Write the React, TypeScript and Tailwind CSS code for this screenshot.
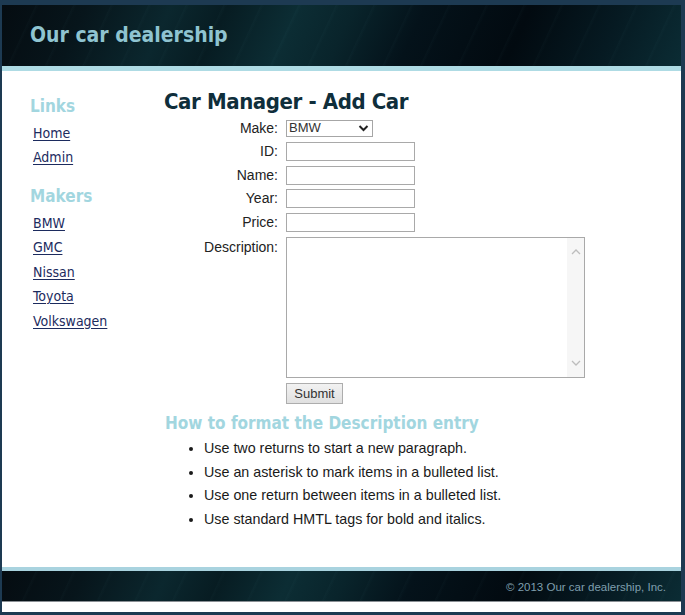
export default function App() {
  const heading = "font-['DejaVu_Sans_Condensed','DejaVu_Sans',sans-serif] font-stretch-condensed font-bold";
  const stripes =
    "bg-[repeating-linear-gradient(115deg,rgba(255,255,255,0)_0px,rgba(255,255,255,0)_30px,rgba(120,200,210,0.025)_31px,rgba(255,255,255,0)_34px),linear-gradient(115deg,#050c11_0%,#07151b_12%,#0b272e_24%,#071c22_32%,#0c2d34_42%,#09242b_50%,#04121a_60%,#020a10_75%,#061a22_88%,#0b2c34_100%)]";
  const rows = ["ID", "Name", "Year", "Price"];
  const makers = ["BMW", "GMC", "Nissan", "Toyota", "Volkswagen"];
  const tips = [
    "Use two returns to start a new paragraph.",
    "Use an asterisk to mark items in a bulleted list.",
    "Use one return between items in a bulleted list.",
    "Use standard HMTL tags for bold and italics.",
  ];
  return (
    <div className="w-[685px] h-[615px] bg-[#1d3a52] pt-[5px] pl-[2px] pr-[4px] pb-[3px] font-['Liberation_Sans',Arial,sans-serif]">
      <div className="h-full bg-white flex flex-col">
        <header className={`h-[66px] shrink-0 border-b-[5px] border-[#aedbe4] ${stripes} flex items-center pl-[28px]`}>
          <h1 className={`${heading} text-[21px] text-[#8fc4d1] leading-none`}>Our car dealership</h1>
        </header>
        <div className="flex-1 flex">
          <aside className="w-[162px] shrink-0 pl-[28px] pt-[24px]">
            <h2 className={`${heading} text-[17px] text-[#a2d6df] leading-[22px]`}>Links</h2>
            <ul className="pl-[3px] mt-[4px]">
              {["Home", "Admin"].map((l) => (
                <li key={l} className="h-[24px] leading-[24px]">
                  <a className="font-['DejaVu_Sans_Condensed','DejaVu_Sans',sans-serif] font-stretch-condensed text-[14px] text-[#1c2b5e] underline underline-offset-2">
                    {l}
                  </a>
                </li>
              ))}
            </ul>
            <h2 className={`${heading} text-[17px] text-[#a2d6df] leading-[22px] mt-[16px]`}>Makers</h2>
            <ul className="pl-[3px] mt-[4px]">
              {makers.map((l) => (
                <li key={l} className="h-[24.4px] leading-[24px]">
                  <a className="font-['DejaVu_Sans_Condensed','DejaVu_Sans',sans-serif] font-stretch-condensed text-[14px] text-[#1c2b5e] underline underline-offset-2">
                    {l}
                  </a>
                </li>
              ))}
            </ul>
          </aside>
          <main className="flex-1 pt-[17px]">
            <h1 className={`${heading} text-[22px] tracking-[-0.4px] text-[#0f2e3b] leading-[28px]`}>Car Manager - Add Car</h1>
            <div className="flex flex-col gap-[5.5px] text-[14px] text-[#222] mt-[3px]">
              <div className="flex items-center h-[18px]">
                <span className="w-[114px] text-right">Make:</span>
                <div className="ml-[8px] w-[87px] h-[17px] border border-[#a6a6a6] flex items-center justify-between pl-[2px] pr-[3px] text-[13px] text-[#333]">
                  <span>BMW</span>
                  <svg width="11" height="8" viewBox="0 0 11 8">
                    <path d="M1.5 2 L5.5 6 L9.5 2" fill="none" stroke="#222" strokeWidth="2" />
                  </svg>
                </div>
              </div>
              {rows.map((r) => (
                <div key={r} className="flex items-center h-[18px]">
                  <span className="w-[114px] text-right">{r}:</span>
                  <div className="ml-[8px] w-[129px] h-[19px] border border-[#a9a9a9] bg-white" />
                </div>
              ))}
              <div className="flex items-start mt-[0.5px]">
                <span className="w-[114px] text-right leading-[18px] pt-[1px]">Description:</span>
                <div className="ml-[8px] w-[299px] h-[141px] border border-[#a9a9a9] flex">
                  <div className="flex-1" />
                  <div className="w-[17px] bg-[#f6f6f6] flex flex-col items-center justify-between py-[11px]">
                    <svg width="10" height="6" viewBox="0 0 10 6">
                      <path d="M1 5 L5 1 L9 5" fill="none" stroke="#bdbdbd" strokeWidth="1.3" />
                    </svg>
                    <svg width="10" height="6" viewBox="0 0 10 6">
                      <path d="M1 1 L5 5 L9 1" fill="none" stroke="#bdbdbd" strokeWidth="1.3" />
                    </svg>
                  </div>
                </div>
              </div>
              <div className="pl-[122px] -mt-[0.5px]">
                <button className="w-[57px] h-[21px] border border-[#adadad] bg-[linear-gradient(#f2f2f2,#e0e0e0)] text-[13px] text-[#333] leading-none">
                  Submit
                </button>
              </div>
            </div>
            <h2 className={`${heading} text-[17px] text-[#a2d6df] leading-[22px] mt-[8px] pl-[1px]`}>
              How to format the Description entry
            </h2>
            <ul className="list-disc pl-[40px] mt-[3px] text-[14.3px] text-[#1a1a1a]">
              {tips.map((t) => (
                <li key={t} className="h-[23.7px] leading-[23.7px]">
                  {t}
                </li>
              ))}
            </ul>
          </main>
        </div>
        <footer className="shrink-0">
          <div className={`h-[35px] border-t-[4px] border-t-[#a9d3df] border-b border-b-[#8a8f94] ${stripes} flex items-center justify-end pr-[15px] pt-[3px]`}>
            <span className="text-[11.5px] text-[#7f9fae]">© 2013 Our car dealership, Inc.</span>
          </div>
          <div className="h-[10px]" />
        </footer>
      </div>
    </div>
  );
}
